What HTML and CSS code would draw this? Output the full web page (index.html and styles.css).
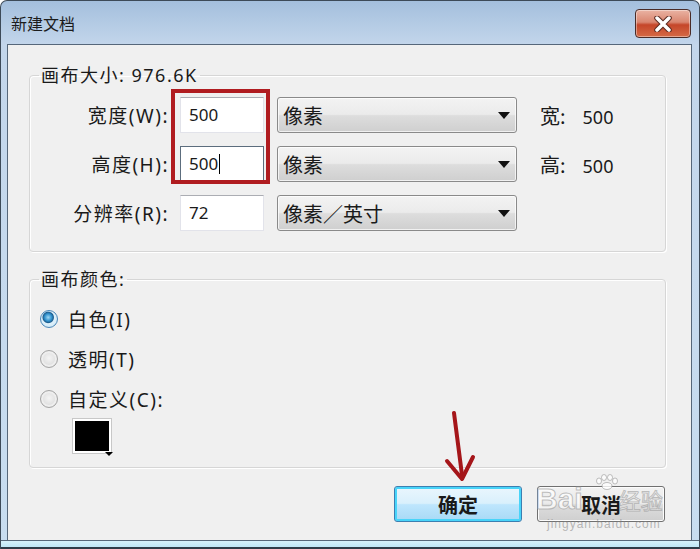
FILE: index.html
```html
<!DOCTYPE html>
<html lang="zh-CN">
<head>
    <meta charset="UTF-8">
    <meta name="viewport" content="width=device-width, initial-scale=1.0">
    <title>新建文档</title>
    <link rel="stylesheet" href="styles.css">
</head>
<body>
    <div class="window">
        <div class="titlebar">
            <span class="title">新建文档</span>
            <div class="close">
                <svg width="26" height="16" viewBox="0 0 26 16">
                    <path d="M7 2 L19 14 M19 2 L7 14" stroke="#5a2a20" stroke-width="5.5" stroke-linecap="round"/>
                    <path d="M7 2 L19 14 M19 2 L7 14" stroke="#ffffff" stroke-width="3.5" stroke-linecap="round"/>
                </svg>
            </div>
        </div>

        <div class="client">
            <fieldset class="group">
                <legend>画布大小: 976.6K</legend>
                <div class="size-grid">
                    <div class="mark"></div>

                    <label class="field-label">宽度(W):</label>
                    <div class="input">500</div>
                    <div class="select">像素<span class="caret"></span></div>
                    <div class="info"><span class="info-key">宽:</span>500</div>

                    <label class="field-label">高度(H):</label>
                    <div class="input focused">500<span class="cursor"></span></div>
                    <div class="select">像素<span class="caret"></span></div>
                    <div class="info"><span class="info-key">高:</span>500</div>

                    <label class="field-label">分辨率(R):</label>
                    <div class="input">72</div>
                    <div class="select">像素／英寸<span class="caret"></span></div>
                    <div class="info"></div>
                </div>
            </fieldset>

            <fieldset class="group colors">
                <legend>画布颜色:</legend>
                <div class="radio-row"><span class="radio checked"></span>白色(I)</div>
                <div class="radio-row"><span class="radio"></span>透明(T)</div>
                <div class="radio-row"><span class="radio"></span>自定义(C):</div>
                <div class="swatch"><span class="swatch-caret"></span></div>
            </fieldset>

            <div class="buttons">
                <div class="btn default">确定</div>
                <div class="btn">取消</div>
            </div>

            <div class="watermark">
                <svg class="wm-paw" width="26" height="16" viewBox="0 0 26 16">
                    <g fill="rgba(255,255,255,0.8)" stroke="rgba(150,150,150,0.6)" stroke-width="1">
                        <ellipse cx="5" cy="7" rx="2.5" ry="3"/>
                        <ellipse cx="10" cy="3.5" rx="2.5" ry="3"/>
                        <ellipse cx="16" cy="3.5" rx="2.5" ry="3"/>
                        <ellipse cx="21" cy="7" rx="2.5" ry="3"/>
                        <ellipse cx="13" cy="12" rx="5" ry="3.5"/>
                    </g>
                </svg>
                <div class="wm-line"><span class="wm-bai">Bai</span><span class="wm-jy">经验</span></div>
                <span class="wm-url">jingyan.baidu.com</span>
            </div>

            <svg class="arrow" width="40" height="80" viewBox="0 0 40 80">
                <path d="M11 2 L19 64" stroke="#a5161a" stroke-width="4" stroke-linecap="round"/>
                <path d="M4 50 L19 68 L30 46" stroke="#a5161a" stroke-width="4" fill="none" stroke-linecap="round" stroke-linejoin="round"/>
            </svg>
        </div>
        <div class="bottom-frame"></div>
    </div>
</body>
</html>
```

FILE: styles.css
```css
html, body {
    margin: 0;
    background: #ffffff;
}

body {
    font-family: "Noto Sans", "Noto Sans CJK SC", sans-serif;
    color: #1a1a1a;
}

.window {
    width: 700px;
    height: 549px;
    box-sizing: border-box;
    border: 1px solid #3d4a58;
    border-bottom: none;
    border-radius: 7px 7px 0 0;
    background: linear-gradient(to bottom, #a4bfdd, #c3d6eb 44px, #c8ddf0);
    display: flex;
    flex-direction: column;
    overflow: hidden;
}

.titlebar {
    height: 43px;
    display: flex;
    align-items: center;
    justify-content: space-between;
    padding: 0 8px 0 10px;
}

.title {
    font-family: "Noto Sans CJK SC", sans-serif;
    font-size: 16px;
    color: #1c1c1c;
    margin-top: 1px;
}

.close {
    width: 54px;
    height: 27px;
    border: 1px solid #4a2c28;
    border-radius: 4px;
    background: linear-gradient(to bottom, #eab3a3, #d98670 45%, #c5462a 55%, #d56a45);
    display: flex;
    align-items: center;
    justify-content: center;
    margin-top: 2px;
    box-shadow: inset 0 0 0 1px rgba(255, 255, 255, 0.4);
}

.client {
    position: relative;
    margin: 0 7px 0 6px;
    height: 496px;
    box-sizing: border-box;
    border: 1px solid #56677a;
    border-bottom: none;
    background: #f0f0f0;
    padding-top: 20px;
}

.bottom-frame {
    flex: 1;
    background: linear-gradient(to bottom, #d6f1fb, #bfe6f6);
    border-top: 1px solid #56677a;
    border-bottom: 2px solid #2f3b48;
}

.group {
    margin: 0 25px 0 21px;
    padding: 12px 0 20px 0;
    border: 1px solid #d6d6d6;
    border-radius: 4px;
    box-shadow: inset 1px 1px 0 #ffffff, 1px 1px 0 #ffffff;
}

.group legend {
    margin-left: 9px;
    padding: 0 2px;
    font-family: "Noto Sans", "Noto Sans CJK SC", sans-serif;
    font-size: 18px;
    letter-spacing: 1.5px;
    line-height: 20px;
    color: #1a1a1a;
}

.size-grid {
    position: relative;
    display: grid;
    grid-template-columns: 138px 84px 241px auto;
    grid-auto-rows: 36px;
    column-gap: 12px;
    row-gap: 13px;
    align-items: center;
}

.size-grid .select {
    margin-left: 1px;
}

.size-grid .info {
    margin-left: 11px;
}

.field-label {
    justify-self: end;
    font-size: 19px;
    letter-spacing: 1.5px;
    margin-right: -1px;
}

.input {
    height: 36px;
    box-sizing: border-box;
    background: #ffffff;
    border: 1px solid #e2e3ea;
    border-top-color: #abadb3;
    padding-left: 8px;
    font-size: 17px;
    line-height: 34px;
    display: flex;
    align-items: center;
}

.input.focused {
    border-color: #5c6d7d;
    border-bottom-color: #c8ccd2;
}

.cursor {
    display: inline-block;
    width: 1px;
    height: 20px;
    background: #000;
    margin-left: 1px;
}

.select {
    height: 36px;
    box-sizing: border-box;
    border: 1px solid #8a8a8a;
    border-radius: 3px;
    background: linear-gradient(to bottom, #f3f3f3, #ebebeb 48%, #dddddd 52%, #cfcfcf);
    box-shadow: inset 0 0 0 1px rgba(255, 255, 255, 0.7);
    font-family: "Noto Sans CJK SC", sans-serif;
    font-size: 20px;
    padding: 0 6px 0 5px;
    display: flex;
    align-items: center;
    justify-content: space-between;
}

.caret {
    width: 0;
    height: 0;
    border-left: 6px solid transparent;
    border-right: 6px solid transparent;
    border-top: 7px solid #111;
}

.info {
    font-size: 18px;
}

.info-key {
    font-family: "Noto Sans CJK SC", sans-serif;
    font-size: 20px;
    margin-right: 17px;
}

.mark {
    position: absolute;
    left: 141px;
    top: -8px;
    width: 91px;
    height: 87px;
    border: 4px solid #b01c20;
    pointer-events: none;
}

.colors {
    margin-top: 17px;
    padding: 10px 0 14px 0;
}

.radio-row {
    height: 40px;
    display: flex;
    align-items: center;
    font-size: 19px;
    letter-spacing: 1.5px;
    padding-left: 10px;
}

.radio {
    width: 18px;
    height: 18px;
    box-sizing: border-box;
    border-radius: 50%;
    border: 1px solid #a4a4a4;
    background: radial-gradient(circle at 50% 45%, #f4f4f4, #dcdcdc 70%, #cbcbcb);
    margin-right: 10px;
    box-shadow: inset 0 0 0 2px #eeeeee;
}

.radio.checked {
    border-color: #4a87b8;
    background: radial-gradient(circle at 45% 40%, #9fd8f5 0, #2e8fcb 28%, #1d5e8f 40%, #dff1fb 48%, #c5e2f2 100%);
    box-shadow: none;
}

.swatch {
    position: relative;
    margin: 0 0 0 43px;
    width: 38px;
    height: 34px;
    box-sizing: border-box;
    background: #000;
    border: 2px solid #fff;
    outline: 1px solid #c8c8c8;
}

.swatch-caret {
    position: absolute;
    right: -4px;
    bottom: -5px;
    width: 0;
    height: 0;
    border-left: 4px solid transparent;
    border-right: 4px solid transparent;
    border-top: 4px solid #000;
}

.buttons {
    display: flex;
    justify-content: flex-end;
    gap: 15px;
    margin: 18px 26px 0 0;
}

.btn {
    width: 128px;
    height: 36px;
    box-sizing: border-box;
    border: 1px solid #707070;
    border-radius: 3px;
    background: linear-gradient(to bottom, #f2f2f2, #ebebeb 48%, #dddddd 52%, #cfcfcf);
    box-shadow: inset 0 0 0 1px #fcfcfc;
    font-family: "Noto Sans CJK SC", sans-serif;
    font-size: 20px;
    font-weight: bold;
    display: flex;
    align-items: center;
    justify-content: center;
}

.btn.default {
    border: 1px solid #3c7fb1;
    background: linear-gradient(to bottom, #eaf6fd, #d9f0fc 48%, #bee6fd 52%, #a7d9f5);
    box-shadow: inset 0 0 0 2px #48d4f9;
}

.watermark {
    position: absolute;
    left: 528px;
    top: 429px;
    width: 140px;
    pointer-events: none;
}

.wm-paw {
    display: block;
    margin: 0 0 -8px 58px;
}

.wm-line {
    display: flex;
    align-items: center;
}

.wm-bai {
    font-family: "Liberation Sans", sans-serif;
    font-size: 30px;
    font-weight: bold;
    color: rgba(255, 255, 255, 0.7);
    -webkit-text-stroke: 1px rgba(150, 150, 150, 0.6);
}

.wm-jy {
    font-family: "Noto Sans CJK SC", sans-serif;
    font-size: 22px;
    margin-left: 36px;
    color: rgba(255, 255, 255, 0.65);
    -webkit-text-stroke: 1px rgba(140, 140, 140, 0.55);
}

.wm-url {
    display: block;
    font-family: "Liberation Sans", sans-serif;
    font-size: 12px;
    color: rgba(130, 130, 130, 0.55);
    margin: 1px 0 0 11px;
    letter-spacing: 1px;
}

.arrow {
    position: absolute;
    left: 435px;
    top: 366px;
}
```
